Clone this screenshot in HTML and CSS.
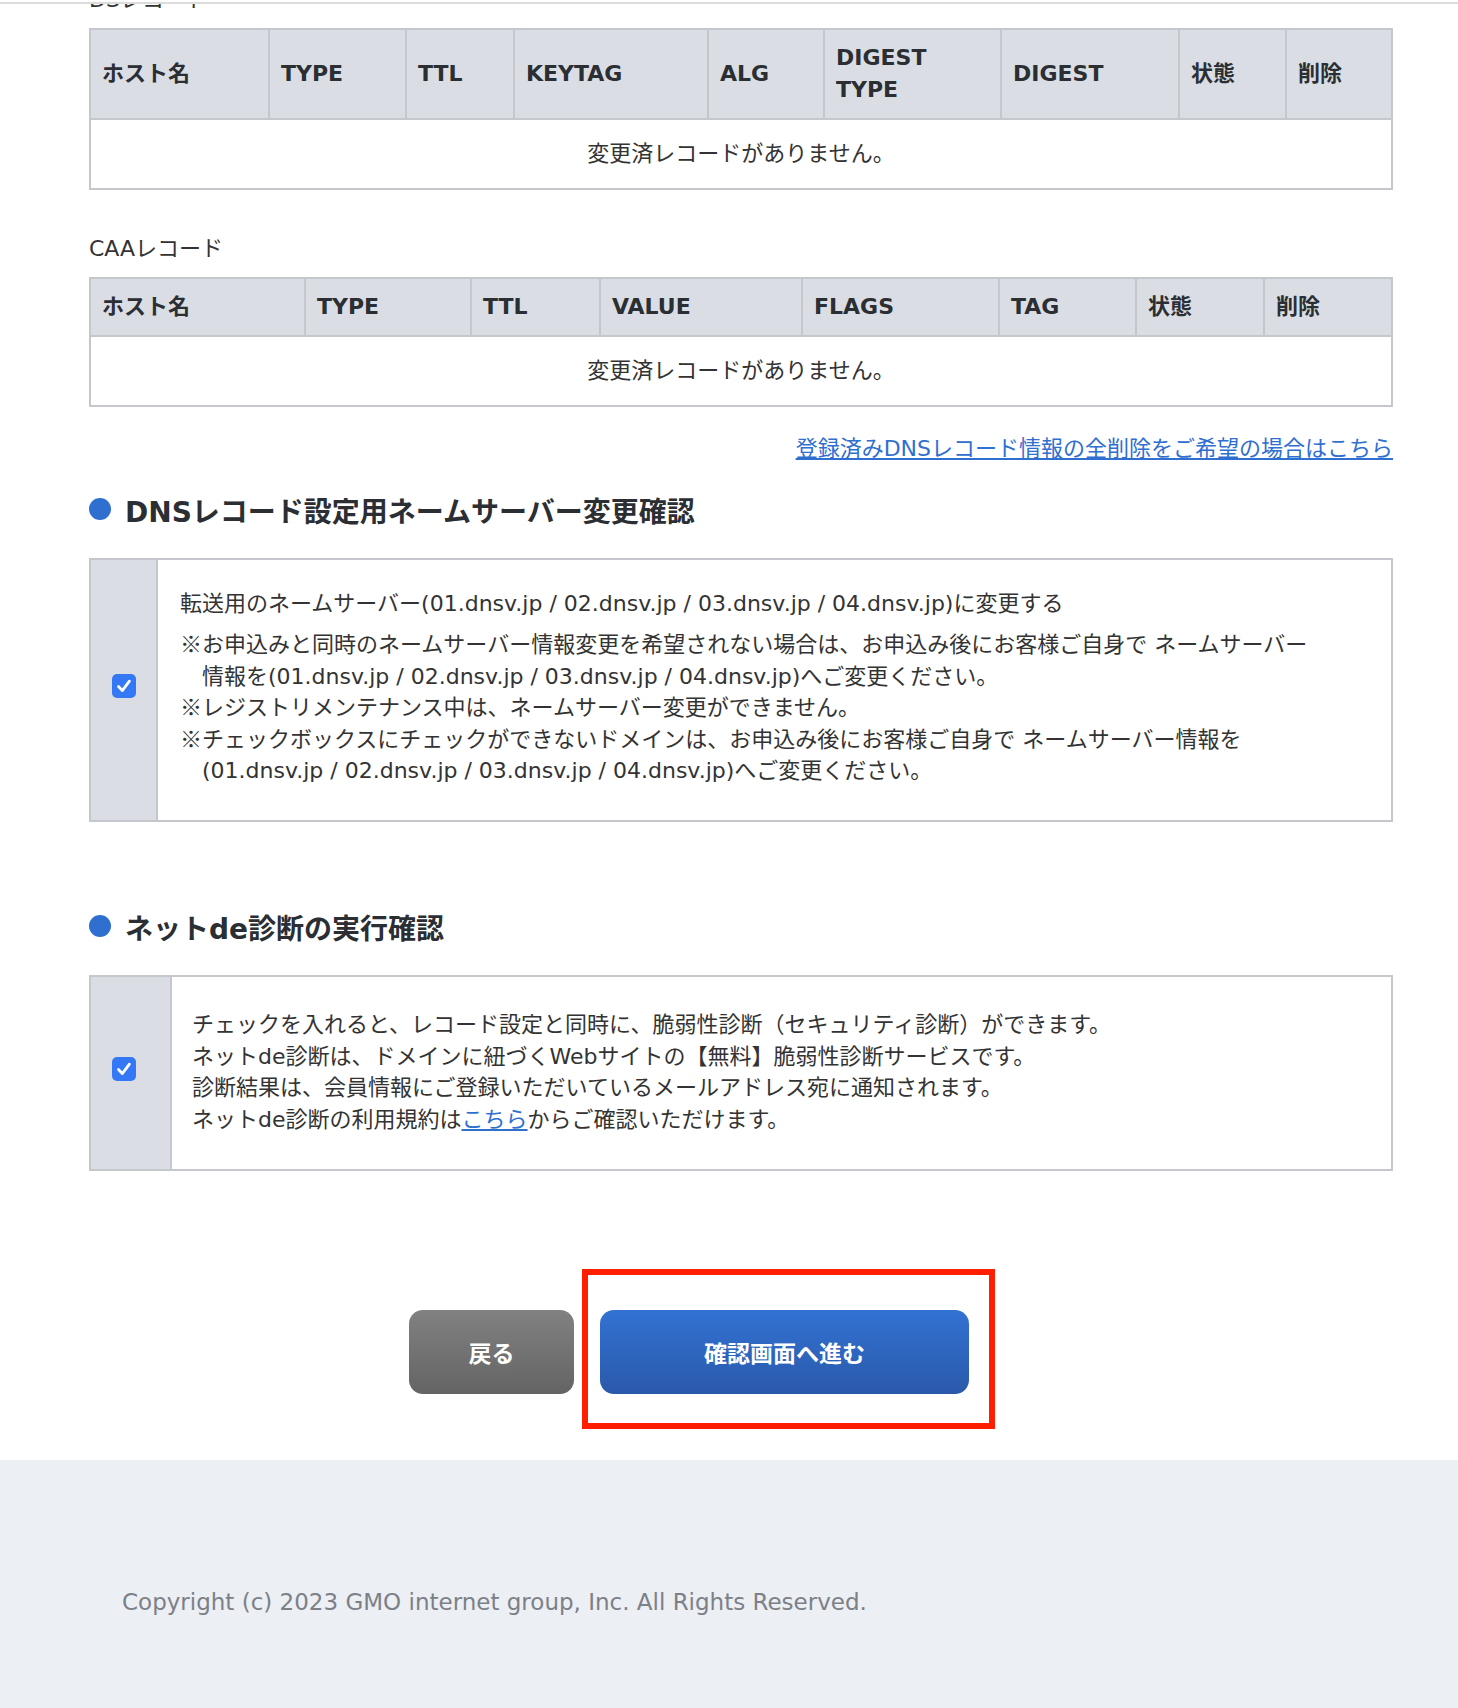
FILE: index.html
```html
<!DOCTYPE html>
<html lang="ja">
<head>
    <meta charset="UTF-8">
    <meta name="viewport" content="width=device-width, initial-scale=1.0">
    <title>DNSレコード設定</title>
    <link rel="stylesheet" href="styles.css">
</head>
<body>
    <div class="topbar"></div>

    <div class="main">
        <p class="rec-label rec-label-first">DSレコード</p>
        <table class="rec-table ds-table">
            <thead>
                <tr>
                    <th>ホスト名</th>
                    <th>TYPE</th>
                    <th>TTL</th>
                    <th>KEYTAG</th>
                    <th>ALG</th>
                    <th>DIGEST<br>TYPE</th>
                    <th>DIGEST</th>
                    <th>状態</th>
                    <th>削除</th>
                </tr>
            </thead>
            <tbody>
                <tr><td class="empty" colspan="9">変更済レコードがありません。</td></tr>
            </tbody>
        </table>

        <p class="rec-label">CAAレコード</p>
        <table class="rec-table caa-table">
            <thead>
                <tr>
                    <th>ホスト名</th>
                    <th>TYPE</th>
                    <th>TTL</th>
                    <th>VALUE</th>
                    <th>FLAGS</th>
                    <th>TAG</th>
                    <th>状態</th>
                    <th>削除</th>
                </tr>
            </thead>
            <tbody>
                <tr><td class="empty" colspan="8">変更済レコードがありません。</td></tr>
            </tbody>
        </table>

        <p class="delete-all"><a href="#">登録済みDNSレコード情報の全削除をご希望の場合はこちら</a></p>

        <h2 class="section-title"><span class="dot"></span>DNSレコード設定用ネームサーバー変更確認</h2>
        <div class="confirm-box">
            <div class="confirm-check ns-check">
                <span class="checkbox">
                    <svg width="24" height="24" viewBox="0 0 24 24"><rect width="24" height="24" rx="5" fill="#3478f6"/><path d="M6.5 12.5 L10.3 16.6 L17.4 7.2" fill="none" stroke="#fff" stroke-width="2.8" stroke-linecap="round" stroke-linejoin="round"/></svg>
                </span>
            </div>
            <div class="confirm-body ns-body">
                <p class="ns-lead">転送用のネームサーバー(01.dnsv.jp / 02.dnsv.jp / 03.dnsv.jp / 04.dnsv.jp)に変更する</p>
                <p class="note"><span class="mark">※</span>お申込みと同時のネームサーバー情報変更を希望されない場合は、お申込み後にお客様ご自身で ネームサーバー<br>情報を(01.dnsv.jp / 02.dnsv.jp / 03.dnsv.jp / 04.dnsv.jp)へご変更ください。</p>
                <p class="note"><span class="mark">※</span>レジストリメンテナンス中は、ネームサーバー変更ができません。</p>
                <p class="note"><span class="mark">※</span>チェックボックスにチェックができないドメインは、お申込み後にお客様ご自身で ネームサーバー情報を<br>(01.dnsv.jp / 02.dnsv.jp / 03.dnsv.jp / 04.dnsv.jp)へご変更ください。</p>
            </div>
        </div>

        <h2 class="section-title"><span class="dot"></span>ネットde診断の実行確認</h2>
        <div class="confirm-box diag-box">
            <div class="confirm-check diag-check">
                <span class="checkbox">
                    <svg width="24" height="24" viewBox="0 0 24 24"><rect width="24" height="24" rx="5" fill="#3478f6"/><path d="M6.5 12.5 L10.3 16.6 L17.4 7.2" fill="none" stroke="#fff" stroke-width="2.8" stroke-linecap="round" stroke-linejoin="round"/></svg>
                </span>
            </div>
            <div class="confirm-body diag-body">
                <p>チェックを入れると、レコード設定と同時に、脆弱性診断（セキュリティ診断）ができます。</p>
                <p>ネットde診断は、ドメインに紐づくWebサイトの【無料】脆弱性診断サービスです。</p>
                <p>診断結果は、会員情報にご登録いただいているメールアドレス宛に通知されます。</p>
                <p>ネットde診断の利用規約は<a href="#">こちら</a>からご確認いただけます。</p>
            </div>
        </div>

        <div class="actions">
            <a href="#" class="btn btn-back">戻る</a>
            <div class="next-wrap">
                <a href="#" class="btn btn-next">確認画面へ進む</a>
                <span class="annot"></span>
            </div>
        </div>
    </div>

    <footer class="footer">
        <p>Copyright (c) 2023 GMO internet group, Inc. All Rights Reserved.</p>
    </footer>
</body>
</html>
```

FILE: styles.css
```css
body {
    margin: 0;
    font-family: "DejaVu Sans", "Noto Sans CJK JP", sans-serif;
    font-size: 22px;
    color: #333;
    background-color: #fff;
}
p {
    margin: 0;
}
a {
    color: #2f6fd0;
}
.topbar {
    position: fixed;
    top: 0;
    left: 0;
    right: 0;
    height: 2px;
    background-color: #fff;
    border-bottom: 2px solid #dcdcdc;
    z-index: 10;
}
.main {
    padding: 0 65px 0 89px;
}
.rec-label {
    line-height: 32px;
    margin-bottom: 12px;
}
.rec-label-first {
    margin-top: -16px;
    margin-bottom: 12px;
}
.rec-table {
    width: 100%;
    border-collapse: collapse;
    table-layout: fixed;
    border: 2px solid #c4c7cb;
    margin-bottom: 26px;
}
.ds-table {
    margin-bottom: 43px;
}
.rec-table th {
    box-sizing: border-box;
    background-color: #dadee4;
    border: 2px solid #c4c7cb;
    text-align: left;
    padding: 12px 11px;
    line-height: 32px;
    font-weight: bold;
    color: #2b2e33;
}
.rec-table td.empty {
    text-align: center;
    padding: 18px 11px;
    line-height: 32px;
}
.ds-table th:nth-child(1) { width: 179px; }
.ds-table th:nth-child(2) { width: 137px; }
.ds-table th:nth-child(3) { width: 108px; }
.ds-table th:nth-child(4) { width: 194px; }
.ds-table th:nth-child(5) { width: 116px; }
.ds-table th:nth-child(6) { width: 177px; }
.ds-table th:nth-child(7) { width: 178px; }
.ds-table th:nth-child(8) { width: 107px; }
.caa-table th:nth-child(1) { width: 215px; }
.caa-table th:nth-child(2) { width: 166px; }
.caa-table th:nth-child(3) { width: 129px; }
.caa-table th:nth-child(4) { width: 202px; }
.caa-table th:nth-child(5) { width: 197px; }
.caa-table th:nth-child(6) { width: 137px; }
.caa-table th:nth-child(7) { width: 128px; }
.delete-all {
    text-align: right;
    line-height: 32px;
    margin-bottom: 28px;
}
.section-title {
    display: flex;
    align-items: center;
    gap: 14px;
    margin: 0 0 25px;
    font-size: 28px;
    line-height: 40px;
    font-weight: bold;
    color: #2b2e33;
}
.section-title .dot {
    width: 22px;
    height: 22px;
    border-radius: 50%;
    background-color: #2f6fd0;
    margin-bottom: 8px;
}
.confirm-box {
    display: flex;
    border: 2px solid #c4c7cb;
    margin-bottom: 88px;
}
.diag-box {
    margin-bottom: 139px;
}
.confirm-check {
    display: flex;
    align-items: center;
    padding-left: 21px;
    background-color: #dadee4;
    border-right: 2px solid #c4c7cb;
    box-sizing: border-box;
}
.ns-check {
    width: 67px;
}
.diag-check {
    width: 81px;
}
.checkbox {
    display: flex;
    margin-top: -8px;
}
.confirm-body {
    flex: 1;
    line-height: 31.6px;
}
.ns-body {
    padding: 28px 22px 33px;
}
.ns-lead {
    line-height: 32px;
    margin-bottom: 9px;
}
.note {
    padding-left: 1em;
    text-indent: -1em;
}
.note .mark {
    font-family: "Noto Sans CJK JP", sans-serif;
    line-height: 10px;
}
.diag-body {
    padding: 32px 20px 33px;
    line-height: 31.7px;
}
.actions {
    display: flex;
    justify-content: center;
    gap: 26px;
    padding-right: 104px;
    margin-bottom: 66px;
}
.btn {
    display: flex;
    align-items: center;
    justify-content: center;
    height: 84px;
    border-radius: 14px;
    color: #fff;
    font-size: 23px;
    font-weight: bold;
    text-decoration: none;
}
.btn-back {
    width: 165px;
    background: linear-gradient(#818181, #646464);
}
.btn-next {
    width: 369px;
    background: linear-gradient(#3272d3, #2a59aa);
}
.next-wrap {
    position: relative;
}
.annot {
    position: absolute;
    top: -41px;
    bottom: -35px;
    left: -18px;
    right: -26px;
    border: 6px solid #ff1f00;
}
.footer {
    background-color: #eceff4;
    height: 260px;
    padding: 126px 0 0 122px;
    box-sizing: border-box;
    font-size: 23px;
    color: #7c8087;
    line-height: 32px;
}
```
